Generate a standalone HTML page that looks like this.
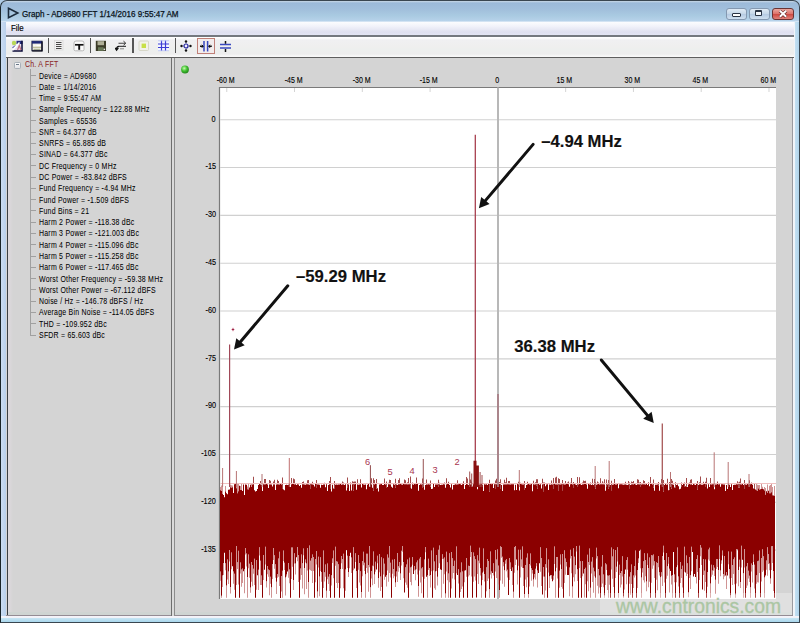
<!DOCTYPE html>
<html><head><meta charset="utf-8"><title>Graph - AD9680 FFT</title>
<style>
html,body{margin:0;padding:0;}
body{width:800px;height:623px;position:relative;overflow:hidden;background:#b0cce6;font-family:"Liberation Sans", sans-serif;}
.t{position:absolute;white-space:nowrap;transform-origin:0 0;line-height:1.2;-webkit-text-stroke:0.15px currentColor;}
.c{position:absolute;white-space:nowrap;text-align:center;line-height:1.2;}
.r{position:absolute;white-space:nowrap;text-align:right;line-height:1.2;}
</style></head><body>
<div style="position:absolute;left:1px;top:1px;width:798px;height:21px;background:linear-gradient(#c9d9e6 0px,#9cbad9 2px,#a2c0dc 9px,#aacbe2 15px,#b7d2ea 20px,#eef4fb 21px);border-radius:6px 6px 0 0"></div>
<div style="position:absolute;left:1px;top:22px;width:5px;height:600px;background:linear-gradient(90deg,#cbdcf2,#b9d0ec)"></div>
<div style="position:absolute;left:793px;top:22px;width:6px;height:600px;background:linear-gradient(90deg,#f4f6fa 0px,#eef3f8 2px,#c4e0f2 2px,#b0d4ec 6px)"></div>
<div style="position:absolute;left:1px;top:616px;width:798px;height:6px;background:linear-gradient(#f6f4fa 0px,#f2f2f8 1.5px,#c8e6f4 2px,#a8d6ec 6px)"></div>
<div style="position:absolute;left:0;top:0;width:798px;height:621px;border:1px solid #3a4650;border-left-color:#1a2428;border-radius:7px 7px 0 0"></div>
<svg style="position:absolute;left:0;top:0" width="30" height="22"><path d="M8.5 8.2 L17.8 13 L8.5 17.8 Z" fill="none" stroke="#1c2c3c" stroke-width="1.6" stroke-linejoin="miter"/></svg>
<div class="t" style="left:21.8px;top:8.6px;font-size:8.6px;transform:scaleX(0.94);color:#0a1420;font-weight:normal;-webkit-text-stroke:0.25px #0a1420">Graph - AD9680 FFT 1/14/2016 9:55:47 AM</div>
<div style="position:absolute;left:725.5px;top:7.5px;width:19px;height:10px;border:1px solid #8498b0;border-radius:3px;background:linear-gradient(#e0ebf5,#c4d6e8 50%,#b4cae2 51%,#cfe0f0);box-sizing:content-box"></div>
<div style="position:absolute;left:748.5px;top:7.5px;width:19px;height:10px;border:1px solid #8498b0;border-radius:3px;background:linear-gradient(#e0ebf5,#c4d6e8 50%,#b4cae2 51%,#cfe0f0);box-sizing:content-box"></div>
<div style="position:absolute;left:771.5px;top:7.5px;width:20px;height:10px;border:1px solid #6a3434;border-radius:3px;background:linear-gradient(#eaa8a0,#dc7068 50%,#cc4840 51%,#e08078);box-sizing:content-box"></div>
<div style="position:absolute;left:732px;top:13px;width:6.5px;height:1.6px;background:#fff;border:1px solid #2a3444;border-radius:1px"></div>
<div style="position:absolute;left:755px;top:10px;width:4.8px;height:3px;border:1.4px solid #2a3444;border-top-width:2px;background:#f4f8fc;border-radius:1px"></div>
<svg style="position:absolute;left:771px;top:7px" width="24" height="14"><path d="M8.8 3.8 L15.2 9.8 M15.2 3.8 L8.8 9.8" stroke="#5a2020" stroke-width="3.2"/><path d="M8.8 3.8 L15.2 9.8 M15.2 3.8 L8.8 9.8" stroke="#fff" stroke-width="2"/></svg>
<div style="position:absolute;left:6px;top:22px;width:788px;height:13.5px;background:linear-gradient(#fbfcfe 0px,#f2f3fa 4px,#dfe0f0 10px,#e2e4f4 13px)"></div>
<div class="t" style="left:10.8px;top:23.0px;font-size:8.8px;transform:scaleX(0.9);color:#000;font-weight:normal;">File</div>
<div style="position:absolute;left:6px;top:35.3px;width:788px;height:1.3px;background:#74787f"></div>
<div style="position:absolute;left:6px;top:36.6px;width:788px;height:20.7px;background:linear-gradient(#ffffff 0px,#fdfdfe 1px,#f0f0f2 3px,#efefee 10px,#edefee 12px,#ededed 17px,#f8f8f8 19px,#f8f8f8 20px)"></div>
<div style="position:absolute;left:6px;top:57px;width:788px;height:1.2px;background:#5e5e5e"></div>
<div style="position:absolute;left:6px;top:58px;width:787px;height:558px;background:#d4d4d4"></div>
<div style="position:absolute;left:6.5px;top:58px;width:1.2px;height:558px;background:#3a3f44"></div>
<div style="position:absolute;left:7.5px;top:58px;width:5px;height:558px;background:linear-gradient(90deg,#dedade,#d8d6d8 60%,#d4d4d4)"></div>
<div style="position:absolute;left:792px;top:58px;width:1px;height:558px;background:#9a9aa0"></div>
<div style="position:absolute;left:7.5px;top:612px;width:784.5px;height:3px;background:#cfd4d2"></div>
<div style="position:absolute;left:6px;top:615px;width:787px;height:1px;background:#948c94"></div>
<div style="position:absolute;left:171px;top:58px;width:1px;height:558px;background:#6e6e6e"></div>
<div style="position:absolute;left:172px;top:58px;width:2px;height:558px;background:#dadada"></div>
<div style="position:absolute;left:174px;top:58px;width:1px;height:558px;background:#8c8c8c"></div>
<div style="position:absolute;left:47.9px;top:38px;width:1.2px;height:15px;background:#555"></div>
<div style="position:absolute;left:90.0px;top:38px;width:1.2px;height:15px;background:#555"></div>
<div style="position:absolute;left:132.4px;top:38px;width:1.2px;height:15px;background:#555"></div>
<div style="position:absolute;left:174.8px;top:38px;width:1.2px;height:15px;background:#555"></div>
<svg style="position:absolute;left:11px;top:40px" width="13" height="12"><rect x="1" y="0.8" width="10.5" height="10.2" fill="#e8e0f0"/><rect x="5.5" y="0.8" width="6" height="3.2" fill="#283080"/><path d="M11 0.8 V11 H1.5" stroke="#0c0c38" stroke-width="1.5" fill="none"/><path d="M1.5 10.2 L8.5 2.5" stroke="#ffffff" stroke-width="1.6"/><path d="M1.5 8 L4 5.5" stroke="#3848a0" stroke-width="1"/><path d="M6.5 10 L8.3 5.5 L10 10" stroke="#c07080" stroke-width="1.2" fill="#f0d0e0"/><circle cx="3" cy="3" r="2.2" fill="#b8d858"/></svg>
<svg style="position:absolute;left:31px;top:40px" width="12" height="12"><rect x="1" y="1.2" width="10" height="9.6" fill="#f2f0e6"/><path d="M1 1.2 H11 V10.8 H1 Z" stroke="#141838" stroke-width="1.1" fill="none"/><rect x="1" y="1.2" width="10" height="2.4" fill="#202a78"/><path d="M2.2 6 h2.3 M5.5 5.6 h4" stroke="#ffffff" stroke-width="1.1"/><path d="M2 7.3 h8" stroke="#b8b890" stroke-width="1.1"/><path d="M2.5 9.3 h7" stroke="#8c9470" stroke-width="0.9"/><path d="M11 1.5 V11 H1.2" stroke="#050510" stroke-width="1.2" fill="none"/></svg>
<svg style="position:absolute;left:54px;top:40px" width="10" height="11"><rect x="0.5" y="0.5" width="8.5" height="9.5" fill="#f0f0f0" stroke="#dadada" stroke-width="0.8"/><path d="M2 2.5 h5.5 M2 4.5 h5.5 M2 6.5 h5.5 M2 8.5 h5.5" stroke="#4a4a4a" stroke-width="1"/></svg>
<svg style="position:absolute;left:72.5px;top:40px" width="13" height="12"><path d="M1 3 Q1 1 3 1 H9 Q11 1 11 3 V9.5 Q11 10.8 9.5 10.8 H2.5 Q1 10.8 1 9.5Z" fill="#fbfbfb" stroke="#a8a8a8" stroke-width="0.8"/><path d="M2 4.8 h8.5" stroke="#111" stroke-width="1.7"/><path d="M6.2 4.8 v5" stroke="#111" stroke-width="1.9"/></svg>
<svg style="position:absolute;left:95px;top:40px" width="12" height="12"><rect x="0.8" y="0.8" width="10.2" height="10.2" fill="#3c3c28"/><rect x="2.5" y="1.2" width="6.5" height="4" fill="#b0b098"/><rect x="3" y="7.2" width="5.5" height="3.6" fill="#687858"/><rect x="8.6" y="8.6" width="1.5" height="1.5" fill="#e8e8e0"/></svg>
<svg style="position:absolute;left:115px;top:40px" width="13" height="12"><path d="M3.5 3.2 H10 M4 6.4 H11" stroke="#444" stroke-width="1.1"/><path d="M8.5 1.2 L10.8 3.2 L8.5 5.2" stroke="#333" stroke-width="1" fill="none"/><path d="M4 6.4 Q1.5 6.4 1.5 9 M0 7.8 L1.6 10.2 L3.4 7.9" stroke="#111" stroke-width="1.2" fill="none"/><path d="M5 8.8 H9" stroke="#888" stroke-width="1"/></svg>
<svg style="position:absolute;left:137.5px;top:39.5px" width="12" height="12"><rect x="1" y="1" width="9.5" height="9.5" rx="1" fill="#f2f2ea" stroke="#d4d4c4" stroke-width="0.9"/><rect x="3.6" y="3.6" width="4.4" height="4.4" fill="#c8e048"/></svg>
<svg style="position:absolute;left:157px;top:40px" width="13" height="12"><rect x="1" y="0.5" width="11" height="10.5" fill="#f4f6ff"/><path d="M1 4 h11 M1 7.5 h11 M4.5 0.5 v10.5 M8.5 0.5 v10.5" stroke="#3c3cd4" stroke-width="1.2"/><path d="M1 0.8 h11 M1 10.7 h11" stroke="#b8c0f0" stroke-width="0.8"/></svg>
<svg style="position:absolute;left:179.5px;top:40px" width="13" height="13"><path d="M6 1.5 v9 M1.5 6 h9" stroke="#9090c0" stroke-width="0.7"/><circle cx="6" cy="6" r="2" fill="#f0f0ff" stroke="#2828a0" stroke-width="1.2"/><circle cx="6" cy="1.5" r="1.2" fill="#111"/><circle cx="6" cy="10.5" r="1.2" fill="#111"/><circle cx="1.5" cy="6" r="1.2" fill="#111"/><circle cx="10.5" cy="6" r="1.2" fill="#111"/></svg>
<div style="position:absolute;left:197px;top:37.5px;width:17.5px;height:16px;border:1.2px solid #c08078;background:#f2ecec;box-sizing:border-box"></div>
<svg style="position:absolute;left:199px;top:39.5px" width="14" height="13"><path d="M5 1 v10.5 M8.6 1 v10.5" stroke="#3848c0" stroke-width="1.5"/><path d="M1 6.3 h3 M9.8 6.3 h3" stroke="#111" stroke-width="1.5"/><path d="M2.8 4.8 L4.3 6.3 L2.8 7.8 M11 4.8 L9.6 6.3 L11 7.8" stroke="#111" stroke-width="1" fill="none"/></svg>
<svg style="position:absolute;left:219px;top:39.5px" width="14" height="13"><path d="M1 4.6 h11 M1 8.1 h11" stroke="#3848c0" stroke-width="1.5"/><path d="M6.5 1 v2.8 M6.5 9 v3" stroke="#111" stroke-width="1.5"/></svg>
<div style="position:absolute;left:13.8px;top:61.6px;width:5.4px;height:5.2px;border:0.9px solid #a8b0b8;border-radius:1.5px;background:linear-gradient(#fafafa,#e4e4e8)"></div>
<div style="position:absolute;left:15.6px;top:64.2px;width:3.4px;height:1px;background:#6a7888"></div>
<div class="t" style="left:25px;top:59.0px;font-size:8.8px;transform:scaleX(0.79);color:#8c2626;font-weight:normal;letter-spacing:0.3px;-webkit-text-stroke:0.05px currentColor">Ch. A FFT</div>
<div style="position:absolute;left:30px;top:69px;width:0.9px;height:265.9px;background:#a0a0a0"></div>
<div style="position:absolute;left:30px;top:75.10px;width:6px;height:0.9px;background:#a0a0a0"></div>
<div class="t" style="left:38.5px;top:70.5px;font-size:8.7px;transform:scaleX(0.8);color:#000;font-weight:normal;letter-spacing:0.3px;-webkit-text-stroke:0.05px #000">Device = AD9680</div>
<div style="position:absolute;left:30px;top:86.38px;width:6px;height:0.9px;background:#a0a0a0"></div>
<div class="t" style="left:38.5px;top:81.78px;font-size:8.7px;transform:scaleX(0.8);color:#000;font-weight:normal;letter-spacing:0.3px;-webkit-text-stroke:0.05px #000">Date = 1/14/2016</div>
<div style="position:absolute;left:30px;top:97.66px;width:6px;height:0.9px;background:#a0a0a0"></div>
<div class="t" style="left:38.5px;top:93.06px;font-size:8.7px;transform:scaleX(0.8);color:#000;font-weight:normal;letter-spacing:0.3px;-webkit-text-stroke:0.05px #000">Time = 9:55:47 AM</div>
<div style="position:absolute;left:30px;top:108.94px;width:6px;height:0.9px;background:#a0a0a0"></div>
<div class="t" style="left:38.5px;top:104.34px;font-size:8.7px;transform:scaleX(0.8);color:#000;font-weight:normal;letter-spacing:0.3px;-webkit-text-stroke:0.05px #000">Sample Frequency = 122.88 MHz</div>
<div style="position:absolute;left:30px;top:120.22px;width:6px;height:0.9px;background:#a0a0a0"></div>
<div class="t" style="left:38.5px;top:115.62px;font-size:8.7px;transform:scaleX(0.8);color:#000;font-weight:normal;letter-spacing:0.3px;-webkit-text-stroke:0.05px #000">Samples = 65536</div>
<div style="position:absolute;left:30px;top:131.50px;width:6px;height:0.9px;background:#a0a0a0"></div>
<div class="t" style="left:38.5px;top:126.9px;font-size:8.7px;transform:scaleX(0.8);color:#000;font-weight:normal;letter-spacing:0.3px;-webkit-text-stroke:0.05px #000">SNR = 64.377 dB</div>
<div style="position:absolute;left:30px;top:142.78px;width:6px;height:0.9px;background:#a0a0a0"></div>
<div class="t" style="left:38.5px;top:138.18px;font-size:8.7px;transform:scaleX(0.8);color:#000;font-weight:normal;letter-spacing:0.3px;-webkit-text-stroke:0.05px #000">SNRFS = 65.885 dB</div>
<div style="position:absolute;left:30px;top:154.06px;width:6px;height:0.9px;background:#a0a0a0"></div>
<div class="t" style="left:38.5px;top:149.45999999999998px;font-size:8.7px;transform:scaleX(0.8);color:#000;font-weight:normal;letter-spacing:0.3px;-webkit-text-stroke:0.05px #000">SINAD = 64.377 dBc</div>
<div style="position:absolute;left:30px;top:165.34px;width:6px;height:0.9px;background:#a0a0a0"></div>
<div class="t" style="left:38.5px;top:160.74px;font-size:8.7px;transform:scaleX(0.8);color:#000;font-weight:normal;letter-spacing:0.3px;-webkit-text-stroke:0.05px #000">DC Frequency = 0 MHz</div>
<div style="position:absolute;left:30px;top:176.62px;width:6px;height:0.9px;background:#a0a0a0"></div>
<div class="t" style="left:38.5px;top:172.01999999999998px;font-size:8.7px;transform:scaleX(0.8);color:#000;font-weight:normal;letter-spacing:0.3px;-webkit-text-stroke:0.05px #000">DC Power = -83.842 dBFS</div>
<div style="position:absolute;left:30px;top:187.90px;width:6px;height:0.9px;background:#a0a0a0"></div>
<div class="t" style="left:38.5px;top:183.3px;font-size:8.7px;transform:scaleX(0.8);color:#000;font-weight:normal;letter-spacing:0.3px;-webkit-text-stroke:0.05px #000">Fund Frequency = -4.94 MHz</div>
<div style="position:absolute;left:30px;top:199.18px;width:6px;height:0.9px;background:#a0a0a0"></div>
<div class="t" style="left:38.5px;top:194.57999999999998px;font-size:8.7px;transform:scaleX(0.8);color:#000;font-weight:normal;letter-spacing:0.3px;-webkit-text-stroke:0.05px #000">Fund Power = -1.509 dBFS</div>
<div style="position:absolute;left:30px;top:210.46px;width:6px;height:0.9px;background:#a0a0a0"></div>
<div class="t" style="left:38.5px;top:205.85999999999999px;font-size:8.7px;transform:scaleX(0.8);color:#000;font-weight:normal;letter-spacing:0.3px;-webkit-text-stroke:0.05px #000">Fund Bins = 21</div>
<div style="position:absolute;left:30px;top:221.74px;width:6px;height:0.9px;background:#a0a0a0"></div>
<div class="t" style="left:38.5px;top:217.14px;font-size:8.7px;transform:scaleX(0.8);color:#000;font-weight:normal;letter-spacing:0.3px;-webkit-text-stroke:0.05px #000">Harm 2 Power = -118.38 dBc</div>
<div style="position:absolute;left:30px;top:233.02px;width:6px;height:0.9px;background:#a0a0a0"></div>
<div class="t" style="left:38.5px;top:228.42px;font-size:8.7px;transform:scaleX(0.8);color:#000;font-weight:normal;letter-spacing:0.3px;-webkit-text-stroke:0.05px #000">Harm 3 Power = -121.003 dBc</div>
<div style="position:absolute;left:30px;top:244.30px;width:6px;height:0.9px;background:#a0a0a0"></div>
<div class="t" style="left:38.5px;top:239.7px;font-size:8.7px;transform:scaleX(0.8);color:#000;font-weight:normal;letter-spacing:0.3px;-webkit-text-stroke:0.05px #000">Harm 4 Power = -115.096 dBc</div>
<div style="position:absolute;left:30px;top:255.58px;width:6px;height:0.9px;background:#a0a0a0"></div>
<div class="t" style="left:38.5px;top:250.98px;font-size:8.7px;transform:scaleX(0.8);color:#000;font-weight:normal;letter-spacing:0.3px;-webkit-text-stroke:0.05px #000">Harm 5 Power = -115.258 dBc</div>
<div style="position:absolute;left:30px;top:266.86px;width:6px;height:0.9px;background:#a0a0a0"></div>
<div class="t" style="left:38.5px;top:262.26px;font-size:8.7px;transform:scaleX(0.8);color:#000;font-weight:normal;letter-spacing:0.3px;-webkit-text-stroke:0.05px #000">Harm 6 Power = -117.465 dBc</div>
<div style="position:absolute;left:30px;top:278.14px;width:6px;height:0.9px;background:#a0a0a0"></div>
<div class="t" style="left:38.5px;top:273.53999999999996px;font-size:8.7px;transform:scaleX(0.8);color:#000;font-weight:normal;letter-spacing:0.3px;-webkit-text-stroke:0.05px #000">Worst Other Frequency = -59.38 MHz</div>
<div style="position:absolute;left:30px;top:289.42px;width:6px;height:0.9px;background:#a0a0a0"></div>
<div class="t" style="left:38.5px;top:284.82px;font-size:8.7px;transform:scaleX(0.8);color:#000;font-weight:normal;letter-spacing:0.3px;-webkit-text-stroke:0.05px #000">Worst Other Power = -67.112 dBFS</div>
<div style="position:absolute;left:30px;top:300.70px;width:6px;height:0.9px;background:#a0a0a0"></div>
<div class="t" style="left:38.5px;top:296.1px;font-size:8.7px;transform:scaleX(0.8);color:#000;font-weight:normal;letter-spacing:0.3px;-webkit-text-stroke:0.05px #000">Noise / Hz = -146.78 dBFS / Hz</div>
<div style="position:absolute;left:30px;top:311.98px;width:6px;height:0.9px;background:#a0a0a0"></div>
<div class="t" style="left:38.5px;top:307.38px;font-size:8.7px;transform:scaleX(0.8);color:#000;font-weight:normal;letter-spacing:0.3px;-webkit-text-stroke:0.05px #000">Average Bin Noise = -114.05 dBFS</div>
<div style="position:absolute;left:30px;top:323.26px;width:6px;height:0.9px;background:#a0a0a0"></div>
<div class="t" style="left:38.5px;top:318.65999999999997px;font-size:8.7px;transform:scaleX(0.8);color:#000;font-weight:normal;letter-spacing:0.3px;-webkit-text-stroke:0.05px #000">THD = -109.952 dBc</div>
<div style="position:absolute;left:30px;top:334.54px;width:6px;height:0.9px;background:#a0a0a0"></div>
<div class="t" style="left:38.5px;top:329.94px;font-size:8.7px;transform:scaleX(0.8);color:#000;font-weight:normal;letter-spacing:0.3px;-webkit-text-stroke:0.05px #000">SFDR = 65.603 dBc</div>
<svg style="position:absolute;left:0;top:0" width="800" height="623" viewBox="0 0 800 623">
<defs><radialGradient id="gd" cx="0.4" cy="0.35" r="0.7"><stop offset="0" stop-color="#c8ffb0"/><stop offset="0.5" stop-color="#40c030"/><stop offset="1" stop-color="#208018"/></radialGradient></defs>
<circle cx="185" cy="69.5" r="3.9" fill="url(#gd)"/>
<rect x="219.5" y="87.5" width="556.5" height="511.5" fill="#ffffff"/>
<path d="M219.5 599 V87.5 H776" stroke="#7a7a7a" stroke-width="1.2" fill="none"/>
<path d="M226.75 88.0 V92.0" stroke="#d4d4d4" stroke-width="1"/>
<path d="M294.53 88.0 V92.0" stroke="#d4d4d4" stroke-width="1"/>
<path d="M362.31 88.0 V92.0" stroke="#d4d4d4" stroke-width="1"/>
<path d="M430.09 88.0 V92.0" stroke="#d4d4d4" stroke-width="1"/>
<path d="M497.87 88.0 V92.0" stroke="#d4d4d4" stroke-width="1"/>
<path d="M565.65 88.0 V92.0" stroke="#d4d4d4" stroke-width="1"/>
<path d="M633.43 88.0 V92.0" stroke="#d4d4d4" stroke-width="1"/>
<path d="M701.21 88.0 V92.0" stroke="#d4d4d4" stroke-width="1"/>
<path d="M768.99 88.0 V92.0" stroke="#d4d4d4" stroke-width="1"/>
<path d="M220.1 119.75 H776" stroke="#d0d0d0" stroke-width="1.1"/>
<path d="M220.1 167.57 H776" stroke="#d0d0d0" stroke-width="1.1"/>
<path d="M220.1 215.39 H776" stroke="#d0d0d0" stroke-width="1.1"/>
<path d="M220.1 263.21 H776" stroke="#d0d0d0" stroke-width="1.1"/>
<path d="M220.1 311.03 H776" stroke="#d0d0d0" stroke-width="1.1"/>
<path d="M220.1 358.85 H776" stroke="#d0d0d0" stroke-width="1.1"/>
<path d="M220.1 406.67 H776" stroke="#d0d0d0" stroke-width="1.1"/>
<path d="M220.1 454.49 H776" stroke="#d0d0d0" stroke-width="1.1"/>
<path d="M220.1 502.31 H776" stroke="#d0d0d0" stroke-width="1.1"/>
<path d="M220.1 550.13 H776" stroke="#d0d0d0" stroke-width="1.1"/>
<path d="M498 87.5 V599" stroke="#b8b8b8" stroke-width="2"/>
<path d="M220 487.0h1V490.2h-1zM220 571.4h1V580.8h-1zM221 485.6h1V491.1h-1zM221 595.7h1V597.8h-1zM222 484.1h1V493.9h-1zM222 575.5h1V586.9h-1zM223 562.9h1V575.0h-1zM225 486.0h1V491.6h-1zM225 563.3h1V570.3h-1zM226 585.6h1V597.8h-1zM227 559.5h1V579.4h-1zM228 571.6h1V583.9h-1zM229 550.1h1V561.5h-1zM230 484.8h1V487.2h-1zM230 586.9h1V593.6h-1zM231 485.2h1V487.8h-1zM231 552.4h1V569.3h-1zM232 485.6h1V487.2h-1zM233 571.5h1V583.7h-1zM234 573.7h1V589.7h-1zM236 486.4h1V488.2h-1zM236 545.9h1V585.1h-1zM237 483.9h1V493.3h-1zM237 562.2h1V569.0h-1zM238 484.0h1V491.3h-1zM238 550.7h1V584.6h-1zM240 486.0h1V490.1h-1zM240 562.6h1V573.4h-1zM241 484.0h1V490.0h-1zM241 569.4h1V586.7h-1zM242 568.4h1V582.9h-1zM244 569.3h1V593.2h-1zM245 547.9h1V554.5h-1zM246 553.6h1V566.4h-1zM247 486.5h1V489.3h-1zM247 577.0h1V597.8h-1zM248 483.3h1V489.4h-1zM248 554.4h1V568.2h-1zM249 563.7h1V577.7h-1zM250 587.6h1V592.8h-1zM251 483.3h1V486.9h-1zM251 562.0h1V581.8h-1zM252 565.1h1V586.2h-1zM253 568.7h1V573.8h-1zM254 558.7h1V585.1h-1zM256 560.0h1V589.7h-1zM258 569.8h1V590.0h-1zM259 547.2h1V555.4h-1zM260 560.8h1V585.0h-1zM261 575.6h1V584.9h-1zM263 554.9h1V579.9h-1zM265 546.7h1V564.4h-1zM266 581.2h1V587.5h-1zM267 566.1h1V574.3h-1zM268 569.5h1V576.7h-1zM269 570.3h1V595.3h-1zM270 576.7h1V583.8h-1zM271 587.2h1V597.8h-1zM272 564.1h1V579.0h-1zM273 548.1h1V560.0h-1zM274 555.3h1V568.8h-1zM275 564.3h1V577.7h-1zM276 581.7h1V594.0h-1zM277 574.0h1V577.7h-1zM278 558.6h1V576.7h-1zM279 551.7h1V585.9h-1zM281 576.0h1V591.4h-1zM282 570.8h1V597.8h-1zM283 550.6h1V561.0h-1zM284 562.8h1V570.1h-1zM285 577.5h1V595.4h-1zM286 574.5h1V576.6h-1zM288 562.9h1V577.8h-1zM289 569.4h1V583.3h-1zM291 547.5h1V578.9h-1zM292 547.6h1V566.8h-1zM293 580.0h1V590.1h-1zM294 553.3h1V563.6h-1zM295 563.6h1V574.4h-1zM297 547.1h1V561.2h-1zM298 555.0h1V581.9h-1zM300 568.6h1V579.7h-1zM301 554.5h1V575.1h-1zM302 563.2h1V588.6h-1zM303 548.4h1V555.2h-1zM304 568.0h1V594.3h-1zM305 559.6h1V562.5h-1zM306 563.5h1V589.1h-1zM307 548.1h1V570.5h-1zM308 582.1h1V597.8h-1zM309 545.6h1V569.5h-1zM310 560.8h1V570.2h-1zM311 558.3h1V571.0h-1zM312 554.4h1V583.0h-1zM313 556.9h1V571.0h-1zM315 559.1h1V582.2h-1zM316 551.0h1V564.6h-1zM317 591.4h1V597.8h-1zM318 556.8h1V567.5h-1zM319 576.5h1V596.3h-1zM320 557.2h1V571.0h-1zM321 571.9h1V581.7h-1zM323 550.5h1V588.0h-1zM324 572.2h1V581.4h-1zM325 564.5h1V576.7h-1zM326 590.7h1V597.8h-1zM327 563.5h1V579.3h-1zM328 576.8h1V584.0h-1zM329 574.0h1V591.0h-1zM331 575.3h1V585.5h-1zM332 558.4h1V562.9h-1zM333 550.6h1V578.2h-1zM335 546.7h1V565.7h-1zM336 561.2h1V583.1h-1zM337 561.7h1V587.9h-1zM338 564.2h1V583.1h-1zM340 569.0h1V588.2h-1zM341 556.0h1V563.2h-1zM342 558.9h1V569.1h-1zM343 553.7h1V588.2h-1zM345 569.6h1V590.8h-1zM347 555.8h1V567.9h-1zM348 571.9h1V577.1h-1zM349 556.1h1V568.2h-1zM351 557.6h1V573.1h-1zM353 547.2h1V570.3h-1zM355 553.3h1V562.0h-1zM356 570.9h1V587.9h-1zM358 555.1h1V569.8h-1zM359 563.0h1V582.6h-1zM360 571.3h1V585.4h-1zM361 592.1h1V597.8h-1zM362 561.0h1V576.3h-1zM363 551.8h1V565.2h-1zM364 562.7h1V571.1h-1zM365 574.3h1V597.8h-1zM366 553.7h1V567.9h-1zM367 553.7h1V572.8h-1zM368 565.1h1V591.8h-1zM369 545.9h1V567.3h-1zM370 587.3h1V597.8h-1zM371 570.9h1V578.4h-1zM372 565.8h1V585.2h-1zM373 551.5h1V566.3h-1zM374 574.4h1V584.0h-1zM375 561.8h1V571.8h-1zM377 555.8h1V563.2h-1zM378 577.9h1V587.8h-1zM379 553.9h1V572.3h-1zM380 576.5h1V590.9h-1zM381 557.2h1V586.9h-1zM383 558.4h1V574.5h-1zM384 563.7h1V579.8h-1zM386 575.3h1V586.4h-1zM387 554.6h1V570.4h-1zM388 557.8h1V581.7h-1zM389 546.0h1V572.9h-1zM390 562.7h1V577.4h-1zM392 559.8h1V573.8h-1zM393 569.0h1V578.3h-1zM394 559.2h1V576.3h-1zM395 582.5h1V587.1h-1zM396 571.4h1V576.4h-1zM397 553.1h1V581.9h-1zM398 566.2h1V571.8h-1zM399 562.1h1V567.8h-1zM400 573.5h1V579.9h-1zM401 550.8h1V565.6h-1zM402 546.1h1V551.7h-1zM403 562.0h1V578.3h-1zM405 567.3h1V582.6h-1zM406 564.5h1V584.8h-1zM407 559.5h1V587.8h-1zM409 557.8h1V572.8h-1zM410 567.6h1V581.9h-1zM411 566.7h1V585.3h-1zM412 556.9h1V564.7h-1zM414 565.9h1V570.5h-1zM415 569.7h1V580.2h-1zM416 562.6h1V569.2h-1zM417 560.6h1V574.4h-1zM418 586.1h1V596.7h-1zM419 558.8h1V570.4h-1zM420 556.9h1V582.5h-1zM421 568.4h1V593.3h-1zM422 567.3h1V576.7h-1zM424 559.6h1V578.7h-1zM425 547.1h1V552.2h-1zM427 575.2h1V597.8h-1zM428 558.8h1V570.0h-1zM429 568.0h1V575.9h-1zM430 575.1h1V587.5h-1zM431 550.6h1V571.2h-1zM433 547.7h1V570.5h-1zM434 561.6h1V588.2h-1zM435 571.4h1V589.7h-1zM436 555.1h1V571.0h-1zM437 576.8h1V585.4h-1zM438 549.7h1V568.0h-1zM439 545.5h1V563.2h-1zM440 569.3h1V569.8h-1zM441 570.1h1V597.8h-1zM442 554.2h1V559.1h-1zM443 558.7h1V583.7h-1zM444 557.6h1V574.2h-1zM445 593.6h1V597.8h-1zM446 551.7h1V571.6h-1zM447 562.2h1V580.2h-1zM448 573.5h1V597.8h-1zM449 553.2h1V582.3h-1zM451 552.0h1V588.4h-1zM452 558.3h1V578.4h-1zM453 566.1h1V573.0h-1zM454 560.7h1V579.6h-1zM456 546.5h1V573.3h-1zM458 569.3h1V583.6h-1zM460 572.4h1V591.9h-1zM461 562.5h1V589.1h-1zM462 571.4h1V586.4h-1zM464 570.8h1V582.2h-1zM466 557.9h1V576.8h-1zM468 565.7h1V576.5h-1zM469 566.1h1V575.2h-1zM470 545.7h1V557.0h-1zM471 551.9h1V576.4h-1zM473 552.4h1V581.7h-1zM474 556.2h1V576.6h-1zM475 559.3h1V580.4h-1zM477 555.3h1V574.0h-1zM478 560.8h1V584.1h-1zM479 547.7h1V563.2h-1zM480 568.1h1V575.4h-1zM481 585.5h1V597.8h-1zM482 572.7h1V580.0h-1zM483 548.6h1V571.4h-1zM484 574.0h1V581.4h-1zM486 567.3h1V591.3h-1zM487 558.9h1V581.1h-1zM488 561.0h1V578.6h-1zM489 589.0h1V597.8h-1zM490 551.4h1V574.4h-1zM491 571.5h1V578.6h-1zM493 563.3h1V575.5h-1zM495 550.1h1V571.4h-1zM496 559.5h1V578.0h-1zM497 549.2h1V578.4h-1zM498 565.6h1V584.6h-1zM499 589.9h1V597.8h-1zM500 546.3h1V580.5h-1zM501 547.0h1V557.8h-1zM502 556.8h1V583.8h-1zM503 562.2h1V566.2h-1zM504 570.3h1V586.7h-1zM505 560.6h1V563.8h-1zM506 559.0h1V571.2h-1zM507 569.7h1V577.4h-1zM509 558.0h1V580.0h-1zM510 562.6h1V569.1h-1zM512 567.6h1V584.9h-1zM513 591.8h1V597.8h-1zM514 547.1h1V572.8h-1zM515 546.0h1V565.1h-1zM517 570.6h1V584.5h-1zM518 549.7h1V565.8h-1zM520 549.7h1V577.6h-1zM521 559.5h1V566.7h-1zM522 546.4h1V568.0h-1zM523 567.9h1V586.0h-1zM524 594.1h1V597.8h-1zM525 564.9h1V579.4h-1zM526 557.7h1V587.2h-1zM527 553.6h1V577.3h-1zM528 593.9h1V597.8h-1zM529 564.0h1V586.6h-1zM530 553.6h1V565.5h-1zM531 568.2h1V580.8h-1zM532 570.1h1V573.4h-1zM533 579.5h1V586.6h-1zM534 574.1h1V577.6h-1zM535 568.8h1V579.6h-1zM536 563.3h1V566.3h-1zM537 570.4h1V587.6h-1zM540 547.3h1V571.8h-1zM541 558.1h1V586.1h-1zM543 566.9h1V576.6h-1zM544 576.7h1V597.8h-1zM545 564.3h1V590.6h-1zM546 548.2h1V567.7h-1zM548 559.6h1V572.5h-1zM549 576.2h1V588.0h-1zM551 575.1h1V578.7h-1zM553 575.8h1V579.8h-1zM554 546.4h1V564.0h-1zM555 571.4h1V597.8h-1zM556 557.0h1V567.8h-1zM557 557.0h1V578.5h-1zM559 570.7h1V587.7h-1zM560 554.4h1V564.4h-1zM561 569.0h1V587.0h-1zM562 554.0h1V588.8h-1zM564 550.3h1V583.1h-1zM565 558.4h1V574.8h-1zM566 562.1h1V566.4h-1zM569 567.6h1V596.2h-1zM570 549.8h1V558.6h-1zM571 556.1h1V573.2h-1zM572 586.4h1V597.8h-1zM573 548.2h1V577.3h-1zM574 556.8h1V581.4h-1zM575 565.3h1V574.3h-1zM576 546.1h1V551.5h-1zM577 569.3h1V581.0h-1zM579 545.7h1V568.1h-1zM580 561.3h1V578.0h-1zM582 560.9h1V576.3h-1zM584 568.9h1V597.5h-1zM585 567.8h1V584.3h-1zM587 554.8h1V581.3h-1zM588 562.1h1V591.3h-1zM589 548.5h1V564.9h-1zM590 587.8h1V597.8h-1zM591 561.8h1V573.4h-1zM592 557.2h1V582.1h-1zM593 567.8h1V592.8h-1zM594 571.6h1V576.3h-1zM595 577.8h1V597.8h-1zM596 547.7h1V558.4h-1zM597 556.2h1V585.8h-1zM598 569.0h1V593.4h-1zM599 575.4h1V587.6h-1zM601 566.8h1V586.9h-1zM602 554.9h1V583.4h-1zM603 574.4h1V587.2h-1zM604 595.4h1V597.8h-1zM605 563.2h1V584.9h-1zM606 564.6h1V570.0h-1zM607 575.5h1V590.1h-1zM608 575.8h1V597.8h-1zM609 575.2h1V584.8h-1zM611 547.4h1V569.4h-1zM612 556.5h1V578.8h-1zM613 549.3h1V587.0h-1zM615 550.0h1V578.0h-1zM616 566.7h1V571.9h-1zM617 547.3h1V561.5h-1zM618 593.1h1V597.8h-1zM619 564.8h1V575.0h-1zM620 573.1h1V587.5h-1zM621 570.9h1V584.4h-1zM622 556.3h1V576.6h-1zM623 596.5h1V597.8h-1zM624 574.0h1V589.6h-1zM626 560.1h1V584.2h-1zM627 557.2h1V569.7h-1zM629 576.8h1V583.7h-1zM630 572.3h1V594.8h-1zM631 564.6h1V583.9h-1zM633 575.6h1V588.1h-1zM634 566.0h1V577.5h-1zM635 550.6h1V575.6h-1zM637 570.0h1V587.9h-1zM638 558.4h1V563.0h-1zM640 549.7h1V568.3h-1zM641 577.5h1V597.8h-1zM642 568.3h1V572.6h-1zM643 561.3h1V580.2h-1zM644 553.3h1V582.4h-1zM645 560.0h1V576.3h-1zM646 581.6h1V591.2h-1zM647 553.4h1V565.1h-1zM648 568.1h1V587.2h-1zM649 557.5h1V581.7h-1zM651 554.9h1V582.7h-1zM652 555.5h1V568.8h-1zM653 554.6h1V565.5h-1zM654 561.2h1V577.9h-1zM656 562.2h1V579.8h-1zM657 563.0h1V590.2h-1zM658 555.9h1V567.3h-1zM659 572.2h1V575.5h-1zM660 577.3h1V597.8h-1zM661 572.2h1V576.2h-1zM662 556.1h1V585.9h-1zM663 545.7h1V552.5h-1zM664 560.1h1V582.6h-1zM666 553.1h1V578.7h-1zM667 566.2h1V575.7h-1zM668 556.9h1V563.8h-1zM669 568.7h1V592.5h-1zM671 575.8h1V584.6h-1zM672 575.1h1V597.8h-1zM674 574.6h1V582.3h-1zM676 567.3h1V582.3h-1zM677 547.5h1V565.3h-1zM678 576.5h1V586.4h-1zM680 562.1h1V582.9h-1zM681 568.9h1V577.9h-1zM682 565.8h1V587.6h-1zM684 546.7h1V571.7h-1zM686 555.4h1V576.0h-1zM687 563.2h1V574.1h-1zM688 592.2h1V597.3h-1zM689 557.0h1V577.9h-1zM690 575.3h1V588.9h-1zM691 546.8h1V571.2h-1zM696 559.1h1V583.4h-1zM697 555.2h1V572.0h-1zM699 568.0h1V579.9h-1zM700 545.1h1V556.2h-1zM701 547.7h1V565.1h-1zM703 558.9h1V575.1h-1zM704 570.7h1V590.7h-1zM705 559.5h1V581.9h-1zM707 571.9h1V586.8h-1zM708 549.5h1V559.5h-1zM709 547.7h1V560.8h-1zM710 583.6h1V597.8h-1zM711 564.7h1V576.8h-1zM712 570.4h1V574.7h-1zM713 565.3h1V570.8h-1zM714 567.7h1V576.1h-1zM715 579.8h1V594.1h-1zM716 559.0h1V568.9h-1zM717 559.0h1V566.9h-1zM718 570.1h1V583.7h-1zM719 545.6h1V559.1h-1zM720 570.6h1V576.3h-1zM721 560.5h1V563.8h-1zM722 550.6h1V555.6h-1zM723 574.1h1V579.3h-1zM724 555.9h1V576.6h-1zM726 571.9h1V589.0h-1zM728 551.4h1V564.2h-1zM729 569.0h1V578.5h-1zM730 595.3h1V597.8h-1zM731 551.7h1V578.0h-1zM732 565.1h1V585.0h-1zM733 559.2h1V573.9h-1zM734 557.5h1V584.2h-1zM735 594.4h1V597.8h-1zM736 549.1h1V583.5h-1zM738 570.0h1V586.3h-1zM739 559.8h1V566.8h-1zM740 581.9h1V587.9h-1zM741 545.7h1V567.4h-1zM743 573.2h1V597.8h-1zM744 548.9h1V567.4h-1zM746 566.6h1V588.1h-1zM747 563.1h1V585.6h-1zM748 570.8h1V578.6h-1zM749 575.8h1V581.9h-1zM750 587.2h1V597.8h-1zM751 563.6h1V571.5h-1zM752 564.9h1V582.5h-1zM753 554.4h1V562.0h-1zM754 564.7h1V588.4h-1zM756 483.6h1V490.2h-1zM756 575.2h1V583.8h-1zM757 484.8h1V491.0h-1zM757 561.3h1V582.2h-1zM758 484.9h1V488.4h-1zM758 560.8h1V582.6h-1zM759 484.9h1V489.7h-1zM759 550.6h1V573.0h-1zM761 483.7h1V489.1h-1zM761 558.0h1V581.4h-1zM762 486.8h1V488.7h-1zM762 549.2h1V572.0h-1zM763 556.3h1V570.6h-1zM764 487.0h1V490.6h-1zM764 577.6h1V597.8h-1zM765 488.0h1V494.7h-1zM765 575.2h1V576.2h-1zM766 560.4h1V569.7h-1zM767 484.5h1V492.9h-1zM767 547.2h1V575.7h-1zM768 554.0h1V564.0h-1zM769 485.8h1V493.2h-1zM769 563.6h1V570.2h-1zM770 484.9h1V493.2h-1zM770 578.5h1V583.8h-1zM771 483.1h1V492.3h-1zM771 546.3h1V570.1h-1zM772 486.9h1V495.3h-1zM772 546.1h1V562.9h-1zM773 571.0h1V591.0h-1zM774 485.9h1V495.8h-1z" fill="#d09494"/>
<path d="M220 490.2h1V571.4h-1zM221 491.1h1V595.7h-1zM222 493.9h1V575.5h-1zM223 495.1h1V562.9h-1zM224 497.2h1V552.8h-1zM225 491.6h1V563.3h-1zM226 493.2h1V585.6h-1zM227 494.3h1V559.5h-1zM228 489.8h1V571.6h-1zM229 489.4h1V550.1h-1zM230 487.2h1V586.9h-1zM231 487.8h1V552.4h-1zM232 487.2h1V566.2h-1zM233 493.1h1V571.5h-1zM234 484.2h1V573.7h-1zM235 484.0h1V597.8h-1zM236 488.2h1V545.9h-1zM237 493.3h1V562.2h-1zM238 491.3h1V550.7h-1zM239 485.7h1V597.8h-1zM240 490.1h1V562.6h-1zM241 490.0h1V569.4h-1zM242 490.9h1V568.4h-1zM243 484.5h1V571.3h-1zM244 494.9h1V569.3h-1zM245 484.4h1V547.9h-1zM246 484.7h1V553.6h-1zM247 489.3h1V577.0h-1zM248 489.4h1V554.4h-1zM249 487.4h1V563.7h-1zM250 484.7h1V587.6h-1zM251 486.9h1V562.0h-1zM252 484.5h1V565.1h-1zM253 484.2h1V568.7h-1zM254 490.2h1V558.7h-1zM255 491.4h1V597.8h-1zM256 491.0h1V560.0h-1zM257 488.9h1V575.2h-1zM258 484.9h1V569.8h-1zM259 484.1h1V547.2h-1zM260 484.7h1V560.8h-1zM261 485.1h1V575.6h-1zM262 490.9h1V597.8h-1zM263 484.3h1V554.9h-1zM264 484.7h1V569.8h-1zM265 485.0h1V546.7h-1zM266 484.0h1V581.2h-1zM267 484.6h1V566.1h-1zM268 487.9h1V569.5h-1zM269 484.6h1V570.3h-1zM270 484.7h1V576.7h-1zM271 484.4h1V587.2h-1zM272 486.5h1V564.1h-1zM273 484.8h1V548.1h-1zM274 484.7h1V555.3h-1zM275 489.9h1V564.3h-1zM276 484.4h1V581.7h-1zM277 485.0h1V574.0h-1zM278 484.4h1V558.6h-1zM279 484.6h1V551.7h-1zM280 483.9h1V597.9h-1zM281 484.6h1V576.0h-1zM282 489.0h1V570.8h-1zM283 489.5h1V550.6h-1zM284 490.2h1V562.8h-1zM285 485.1h1V577.5h-1zM286 484.7h1V574.5h-1zM287 484.9h1V571.4h-1zM288 484.7h1V562.9h-1zM289 484.1h1V569.4h-1zM290 487.1h1V597.8h-1zM291 485.1h1V547.5h-1zM292 484.1h1V547.6h-1zM293 483.9h1V580.0h-1zM294 484.6h1V553.3h-1zM295 484.3h1V563.6h-1zM296 485.0h1V557.2h-1zM297 484.2h1V547.1h-1zM298 484.5h1V555.0h-1zM299 486.1h1V597.8h-1zM300 484.9h1V568.6h-1zM301 487.8h1V554.5h-1zM302 484.2h1V563.2h-1zM303 484.9h1V548.4h-1zM304 484.5h1V568.0h-1zM305 484.8h1V559.6h-1zM306 484.2h1V563.5h-1zM307 484.3h1V548.1h-1zM308 484.7h1V582.1h-1zM309 484.7h1V545.6h-1zM310 489.1h1V560.8h-1zM311 484.2h1V558.3h-1zM312 484.7h1V554.4h-1zM313 484.8h1V556.9h-1zM314 486.5h1V597.8h-1zM315 484.1h1V559.1h-1zM316 487.2h1V551.0h-1zM317 484.4h1V591.4h-1zM318 484.4h1V556.8h-1zM319 484.7h1V576.5h-1zM320 487.8h1V557.2h-1zM321 484.8h1V571.9h-1zM322 485.0h1V597.8h-1zM323 484.5h1V550.5h-1zM324 484.8h1V572.2h-1zM325 487.3h1V564.5h-1zM326 484.3h1V590.7h-1zM327 491.0h1V563.5h-1zM328 485.0h1V576.8h-1zM329 484.2h1V574.0h-1zM330 489.0h1V597.8h-1zM331 491.4h1V575.3h-1zM332 484.8h1V558.4h-1zM333 488.6h1V550.6h-1zM334 488.9h1V597.8h-1zM335 484.7h1V546.7h-1zM336 484.6h1V561.2h-1zM337 484.8h1V561.7h-1zM338 484.4h1V564.2h-1zM339 484.4h1V597.8h-1zM340 484.0h1V569.0h-1zM341 484.8h1V556.0h-1zM342 484.5h1V558.9h-1zM343 484.4h1V553.7h-1zM344 484.9h1V597.8h-1zM345 484.2h1V569.6h-1zM346 490.4h1V549.9h-1zM347 487.3h1V555.8h-1zM348 484.4h1V571.9h-1zM349 490.9h1V556.1h-1zM350 484.5h1V552.7h-1zM351 490.6h1V557.6h-1zM352 485.1h1V597.8h-1zM353 490.8h1V547.2h-1zM354 484.9h1V568.6h-1zM355 484.0h1V553.3h-1zM356 489.7h1V570.9h-1zM357 484.6h1V597.8h-1zM358 484.7h1V555.1h-1zM359 484.4h1V563.0h-1zM360 484.2h1V571.3h-1zM361 487.5h1V592.1h-1zM362 483.9h1V561.0h-1zM363 484.5h1V551.8h-1zM364 484.8h1V562.7h-1zM365 484.5h1V574.3h-1zM366 489.3h1V553.7h-1zM367 484.8h1V553.7h-1zM368 483.9h1V565.1h-1zM369 486.8h1V545.9h-1zM370 484.2h1V587.3h-1zM371 484.6h1V570.9h-1zM372 487.7h1V565.8h-1zM373 490.5h1V551.5h-1zM374 484.8h1V574.4h-1zM375 484.0h1V561.8h-1zM376 488.5h1V569.6h-1zM377 488.2h1V555.8h-1zM378 491.5h1V577.9h-1zM379 484.6h1V553.9h-1zM380 484.3h1V576.5h-1zM381 484.0h1V557.2h-1zM382 485.0h1V597.8h-1zM383 484.9h1V558.4h-1zM384 484.1h1V563.7h-1zM385 484.4h1V576.8h-1zM386 488.1h1V575.3h-1zM387 487.0h1V554.6h-1zM388 484.2h1V557.8h-1zM389 485.0h1V546.0h-1zM390 484.8h1V562.7h-1zM391 486.8h1V597.8h-1zM392 487.7h1V559.8h-1zM393 484.2h1V569.0h-1zM394 484.8h1V559.2h-1zM395 487.6h1V582.5h-1zM396 484.6h1V571.4h-1zM397 485.0h1V553.1h-1zM398 484.2h1V566.2h-1zM399 484.3h1V562.1h-1zM400 484.1h1V573.5h-1zM401 484.4h1V550.8h-1zM402 484.7h1V546.1h-1zM403 484.0h1V562.0h-1zM404 484.2h1V592.5h-1zM405 484.2h1V567.3h-1zM406 484.3h1V564.5h-1zM407 484.4h1V559.5h-1zM408 485.0h1V597.8h-1zM409 484.3h1V557.8h-1zM410 487.3h1V567.6h-1zM411 488.7h1V566.7h-1zM412 485.1h1V556.9h-1zM413 484.7h1V573.9h-1zM414 484.1h1V565.9h-1zM415 484.2h1V569.7h-1zM416 484.1h1V562.6h-1zM417 484.0h1V560.6h-1zM418 490.8h1V586.1h-1zM419 484.9h1V558.8h-1zM420 484.3h1V556.9h-1zM421 484.4h1V568.4h-1zM422 488.1h1V567.3h-1zM423 485.0h1V597.8h-1zM424 489.8h1V559.6h-1zM425 485.1h1V547.1h-1zM426 484.8h1V576.8h-1zM427 484.5h1V575.2h-1zM428 484.2h1V558.8h-1zM429 484.4h1V568.0h-1zM430 486.6h1V575.1h-1zM431 489.1h1V550.6h-1zM432 488.7h1V597.8h-1zM433 484.0h1V547.7h-1zM434 487.0h1V561.6h-1zM435 484.4h1V571.4h-1zM436 484.6h1V555.1h-1zM437 484.4h1V576.8h-1zM438 486.9h1V549.7h-1zM439 484.5h1V545.5h-1zM440 484.9h1V569.3h-1zM441 484.8h1V570.1h-1zM442 484.7h1V554.2h-1zM443 484.2h1V558.7h-1zM444 484.7h1V557.6h-1zM445 487.8h1V593.6h-1zM446 484.7h1V551.7h-1zM447 483.9h1V562.2h-1zM448 484.1h1V573.5h-1zM449 485.1h1V553.2h-1zM450 487.5h1V597.8h-1zM451 484.3h1V552.0h-1zM452 489.5h1V558.3h-1zM453 484.9h1V566.1h-1zM454 484.7h1V560.7h-1zM455 484.2h1V597.8h-1zM456 484.5h1V546.5h-1zM457 484.6h1V575.0h-1zM458 484.3h1V569.3h-1zM459 484.1h1V597.8h-1zM460 484.2h1V572.4h-1zM461 484.9h1V562.5h-1zM462 484.2h1V571.4h-1zM463 484.1h1V597.8h-1zM464 489.1h1V570.8h-1zM465 484.9h1V570.3h-1zM466 484.1h1V557.9h-1zM467 484.9h1V597.8h-1zM468 484.9h1V565.7h-1zM469 484.1h1V566.1h-1zM470 484.4h1V545.7h-1zM471 484.7h1V551.9h-1zM472 486.6h1V597.8h-1zM473 484.3h1V552.4h-1zM474 484.3h1V556.2h-1zM475 484.9h1V559.3h-1zM476 484.3h1V597.4h-1zM477 489.2h1V555.3h-1zM478 484.7h1V560.8h-1zM479 484.4h1V547.7h-1zM480 484.3h1V568.1h-1zM481 484.1h1V585.5h-1zM482 484.9h1V572.7h-1zM483 490.9h1V548.6h-1zM484 484.3h1V574.0h-1zM485 484.5h1V597.8h-1zM486 484.3h1V567.3h-1zM487 485.1h1V558.9h-1zM488 484.0h1V561.0h-1zM489 491.4h1V589.0h-1zM490 484.0h1V551.4h-1zM491 484.2h1V571.5h-1zM492 483.9h1V572.9h-1zM493 487.9h1V563.3h-1zM494 484.3h1V597.8h-1zM495 489.1h1V550.1h-1zM496 484.2h1V559.5h-1zM497 484.9h1V549.2h-1zM498 484.4h1V565.6h-1zM499 483.9h1V589.9h-1zM500 488.9h1V546.3h-1zM501 484.9h1V547.0h-1zM502 491.1h1V556.8h-1zM503 484.6h1V562.2h-1zM504 484.8h1V570.3h-1zM505 484.4h1V560.6h-1zM506 484.6h1V559.0h-1zM507 484.2h1V569.7h-1zM508 485.1h1V595.0h-1zM509 484.6h1V558.0h-1zM510 484.5h1V562.6h-1zM511 484.2h1V571.0h-1zM512 484.2h1V567.6h-1zM513 484.3h1V591.8h-1zM514 490.2h1V547.1h-1zM515 484.7h1V546.0h-1zM516 490.1h1V559.6h-1zM517 484.0h1V570.6h-1zM518 484.4h1V549.7h-1zM519 490.6h1V597.8h-1zM520 484.0h1V549.7h-1zM521 484.2h1V559.5h-1zM522 484.5h1V546.4h-1zM523 484.5h1V567.9h-1zM524 490.1h1V594.1h-1zM525 487.9h1V564.9h-1zM526 484.9h1V557.7h-1zM527 484.7h1V553.6h-1zM528 484.0h1V593.9h-1zM529 484.6h1V564.0h-1zM530 484.5h1V553.6h-1zM531 483.9h1V568.2h-1zM532 491.2h1V570.1h-1zM533 484.2h1V579.5h-1zM534 484.6h1V574.1h-1zM535 485.0h1V568.8h-1zM536 486.1h1V563.3h-1zM537 488.7h1V570.4h-1zM538 484.1h1V572.9h-1zM539 484.8h1V563.2h-1zM540 484.2h1V547.3h-1zM541 488.5h1V558.1h-1zM542 484.6h1V594.4h-1zM543 491.2h1V566.9h-1zM544 484.0h1V576.7h-1zM545 486.2h1V564.3h-1zM546 484.5h1V548.2h-1zM547 484.3h1V597.8h-1zM548 489.9h1V559.6h-1zM549 484.6h1V576.2h-1zM550 484.7h1V575.2h-1zM551 484.9h1V575.1h-1zM552 484.6h1V581.2h-1zM553 488.9h1V575.8h-1zM554 483.9h1V546.4h-1zM555 484.8h1V571.4h-1zM556 484.4h1V557.0h-1zM557 484.5h1V557.0h-1zM558 490.9h1V597.8h-1zM559 484.5h1V570.7h-1zM560 484.5h1V554.4h-1zM561 484.3h1V569.0h-1zM562 490.2h1V554.0h-1zM563 484.3h1V597.8h-1zM564 484.4h1V550.3h-1zM565 484.8h1V558.4h-1zM566 483.9h1V562.1h-1zM567 484.1h1V574.9h-1zM568 484.3h1V575.0h-1zM569 486.7h1V567.6h-1zM570 484.3h1V549.8h-1zM571 484.0h1V556.1h-1zM572 484.6h1V586.4h-1zM573 487.2h1V548.2h-1zM574 484.1h1V556.8h-1zM575 484.5h1V565.3h-1zM576 485.1h1V546.1h-1zM577 487.0h1V569.3h-1zM578 484.5h1V597.8h-1zM579 484.1h1V545.7h-1zM580 484.3h1V561.3h-1zM581 485.0h1V597.8h-1zM582 484.5h1V560.9h-1zM583 484.9h1V573.6h-1zM584 484.1h1V568.9h-1zM585 484.0h1V567.8h-1zM586 484.5h1V597.8h-1zM587 488.7h1V554.8h-1zM588 484.0h1V562.1h-1zM589 484.4h1V548.5h-1zM590 484.9h1V587.8h-1zM591 485.0h1V561.8h-1zM592 484.5h1V557.2h-1zM593 485.0h1V567.8h-1zM594 484.1h1V571.6h-1zM595 488.8h1V577.8h-1zM596 484.7h1V547.7h-1zM597 484.9h1V556.2h-1zM598 484.1h1V569.0h-1zM599 484.6h1V575.4h-1zM600 484.3h1V597.8h-1zM601 484.2h1V566.8h-1zM602 484.3h1V554.9h-1zM603 485.0h1V574.4h-1zM604 484.8h1V595.4h-1zM605 490.7h1V563.2h-1zM606 487.1h1V564.6h-1zM607 484.5h1V575.5h-1zM608 488.6h1V575.8h-1zM609 484.7h1V575.2h-1zM610 485.1h1V597.8h-1zM611 490.2h1V547.4h-1zM612 484.8h1V556.5h-1zM613 484.4h1V549.3h-1zM614 484.0h1V597.8h-1zM615 484.4h1V550.0h-1zM616 484.4h1V566.7h-1zM617 484.1h1V547.3h-1zM618 488.2h1V593.1h-1zM619 484.5h1V564.8h-1zM620 484.2h1V573.1h-1zM621 484.2h1V570.9h-1zM622 484.4h1V556.3h-1zM623 484.8h1V596.5h-1zM624 484.4h1V574.0h-1zM625 484.7h1V569.4h-1zM626 484.7h1V560.1h-1zM627 485.1h1V557.2h-1zM628 484.8h1V597.8h-1zM629 488.2h1V576.8h-1zM630 484.9h1V572.3h-1zM631 484.8h1V564.6h-1zM632 485.1h1V597.8h-1zM633 484.8h1V575.6h-1zM634 484.1h1V566.0h-1zM635 484.4h1V550.6h-1zM636 485.1h1V597.8h-1zM637 484.3h1V570.0h-1zM638 484.9h1V558.4h-1zM639 484.7h1V550.8h-1zM640 487.0h1V549.7h-1zM641 484.5h1V577.5h-1zM642 484.2h1V568.3h-1zM643 484.2h1V561.3h-1zM644 485.1h1V553.3h-1zM645 484.4h1V560.0h-1zM646 484.1h1V581.6h-1zM647 484.9h1V553.4h-1zM648 484.0h1V568.1h-1zM649 486.2h1V557.5h-1zM650 484.0h1V597.8h-1zM651 484.1h1V554.9h-1zM652 484.5h1V555.5h-1zM653 487.6h1V554.6h-1zM654 490.7h1V561.2h-1zM655 484.8h1V597.8h-1zM656 484.7h1V562.2h-1zM657 484.5h1V563.0h-1zM658 486.1h1V555.9h-1zM659 490.8h1V572.2h-1zM660 484.4h1V577.3h-1zM661 485.0h1V572.2h-1zM662 484.5h1V556.1h-1zM663 491.5h1V545.7h-1zM664 485.0h1V560.1h-1zM665 484.1h1V597.8h-1zM666 484.7h1V553.1h-1zM667 484.6h1V566.2h-1zM668 490.2h1V556.9h-1zM669 489.5h1V568.7h-1zM670 486.2h1V571.1h-1zM671 488.6h1V575.8h-1zM672 484.6h1V575.1h-1zM673 484.8h1V552.0h-1zM674 487.5h1V574.6h-1zM675 487.3h1V597.8h-1zM676 485.1h1V567.3h-1zM677 484.5h1V547.5h-1zM678 486.2h1V576.5h-1zM679 489.3h1V597.8h-1zM680 488.8h1V562.1h-1zM681 487.0h1V568.9h-1zM682 484.9h1V565.8h-1zM683 484.0h1V597.8h-1zM684 486.9h1V546.7h-1zM685 486.3h1V572.5h-1zM686 486.6h1V555.4h-1zM687 486.9h1V563.2h-1zM688 484.5h1V592.2h-1zM689 484.1h1V557.0h-1zM690 484.6h1V575.3h-1zM691 485.0h1V546.8h-1zM692 485.0h1V552.0h-1zM693 484.0h1V576.4h-1zM694 484.6h1V574.0h-1zM695 485.0h1V577.0h-1zM696 484.1h1V559.1h-1zM697 489.5h1V555.2h-1zM698 484.9h1V597.8h-1zM699 484.3h1V568.0h-1zM700 484.3h1V545.1h-1zM701 484.7h1V547.7h-1zM702 484.8h1V589.4h-1zM703 484.3h1V558.9h-1zM704 484.1h1V570.7h-1zM705 486.2h1V559.5h-1zM706 485.1h1V597.8h-1zM707 488.5h1V571.9h-1zM708 484.3h1V549.5h-1zM709 486.9h1V547.7h-1zM710 484.9h1V583.6h-1zM711 484.6h1V564.7h-1zM712 484.2h1V570.4h-1zM713 484.2h1V565.3h-1zM714 489.3h1V567.7h-1zM715 484.4h1V579.8h-1zM716 484.5h1V559.0h-1zM717 484.0h1V559.0h-1zM718 484.6h1V570.1h-1zM719 484.2h1V545.6h-1zM720 486.7h1V570.6h-1zM721 484.2h1V560.5h-1zM722 484.3h1V550.6h-1zM723 484.5h1V574.1h-1zM724 484.5h1V555.9h-1zM725 491.1h1V575.5h-1zM726 485.0h1V571.9h-1zM727 489.0h1V575.6h-1zM728 484.3h1V551.4h-1zM729 484.7h1V569.0h-1zM730 486.9h1V595.3h-1zM731 484.3h1V551.7h-1zM732 489.9h1V565.1h-1zM733 485.1h1V559.2h-1zM734 484.7h1V557.5h-1zM735 484.7h1V594.4h-1zM736 484.3h1V549.1h-1zM737 484.4h1V549.6h-1zM738 487.4h1V570.0h-1zM739 487.6h1V559.8h-1zM740 484.9h1V581.9h-1zM741 484.6h1V545.7h-1zM742 483.9h1V559.7h-1zM743 485.0h1V573.2h-1zM744 489.1h1V548.9h-1zM745 484.6h1V597.8h-1zM746 484.8h1V566.6h-1zM747 484.1h1V563.1h-1zM748 484.6h1V570.8h-1zM749 486.9h1V575.8h-1zM750 484.2h1V587.2h-1zM751 483.9h1V563.6h-1zM752 484.8h1V564.9h-1zM753 488.5h1V554.4h-1zM754 488.9h1V564.7h-1zM755 489.4h1V597.8h-1zM756 490.2h1V575.2h-1zM757 491.0h1V561.3h-1zM758 488.4h1V560.8h-1zM759 489.7h1V550.6h-1zM760 489.3h1V597.3h-1zM761 489.1h1V558.0h-1zM762 488.7h1V549.2h-1zM763 489.2h1V556.3h-1zM764 490.6h1V577.6h-1zM765 494.7h1V575.2h-1zM766 491.2h1V560.4h-1zM767 492.9h1V547.2h-1zM768 490.7h1V554.0h-1zM769 493.2h1V563.6h-1zM770 493.2h1V578.5h-1zM771 492.3h1V546.3h-1zM772 495.3h1V546.1h-1zM773 495.6h1V571.0h-1zM774 495.8h1V597.8h-1z" fill="#8b0000"/>
<path d="M253 476.8h1V484.2h-1zM260 481.0h1V484.7h-1zM264 479.0h1V484.7h-1zM265 479.1h1V485.0h-1zM269 480.1h1V484.6h-1zM270 480.8h1V484.7h-1zM273 481.4h1V484.8h-1zM274 479.7h1V484.7h-1zM277 479.7h1V485.0h-1zM278 480.9h1V484.4h-1zM282 477.6h1V489.0h-1zM291 477.9h1V485.1h-1zM293 478.5h1V483.9h-1zM294 479.2h1V484.6h-1zM302 481.9h1V484.2h-1zM303 481.6h1V484.9h-1zM307 480.3h1V484.3h-1zM308 479.9h1V484.7h-1zM310 483.0h1V489.1h-1zM312 481.7h1V484.7h-1zM316 480.0h1V487.2h-1zM324 482.7h1V484.8h-1zM329 480.9h1V484.2h-1zM330 477.1h1V489.0h-1zM334 480.9h1V488.9h-1zM342 481.5h1V484.5h-1zM343 482.6h1V484.4h-1zM347 477.4h1V487.3h-1zM350 482.6h1V484.5h-1zM352 481.2h1V485.1h-1zM353 481.7h1V490.8h-1zM354 481.5h1V484.9h-1zM355 481.6h1V484.0h-1zM357 479.3h1V484.6h-1zM360 479.2h1V484.2h-1zM371 478.2h1V484.6h-1zM373 478.3h1V490.5h-1zM374 480.0h1V484.8h-1zM376 478.9h1V488.5h-1zM384 478.6h1V484.1h-1zM386 481.5h1V488.1h-1zM388 482.7h1V484.2h-1zM389 479.8h1V485.0h-1zM390 479.9h1V484.8h-1zM395 478.7h1V487.6h-1zM398 480.1h1V484.2h-1zM399 478.3h1V484.3h-1zM404 479.6h1V484.2h-1zM405 480.3h1V484.2h-1zM407 482.2h1V484.4h-1zM408 478.1h1V485.0h-1zM410 476.5h1V487.3h-1zM412 482.5h1V485.1h-1zM416 477.4h1V484.1h-1zM422 478.5h1V488.1h-1zM426 479.5h1V484.8h-1zM430 480.4h1V486.6h-1zM438 479.7h1V486.9h-1zM439 482.8h1V484.5h-1zM444 482.6h1V484.7h-1zM446 478.2h1V484.7h-1zM448 481.8h1V484.1h-1zM457 480.3h1V484.6h-1zM463 481.3h1V484.1h-1zM466 477.1h1V484.1h-1zM467 478.5h1V484.9h-1zM470 479.4h1V484.4h-1zM471 481.5h1V484.7h-1zM489 479.7h1V491.4h-1zM495 480.6h1V489.1h-1zM496 478.7h1V484.2h-1zM499 482.1h1V483.9h-1zM500 479.3h1V488.9h-1zM504 479.7h1V484.8h-1zM505 482.2h1V484.4h-1zM506 477.8h1V484.6h-1zM508 481.0h1V485.1h-1zM509 481.1h1V484.6h-1zM512 482.9h1V484.2h-1zM518 481.7h1V484.4h-1zM520 482.8h1V484.0h-1zM524 481.0h1V490.1h-1zM527 481.7h1V484.7h-1zM533 480.7h1V484.2h-1zM535 482.3h1V485.0h-1zM536 479.3h1V486.1h-1zM537 479.2h1V488.7h-1zM542 478.8h1V484.6h-1zM543 482.5h1V491.2h-1zM544 482.4h1V484.0h-1zM551 480.4h1V484.9h-1zM553 477.9h1V488.9h-1zM555 477.5h1V484.8h-1zM556 476.8h1V484.4h-1zM558 478.2h1V490.9h-1zM559 478.9h1V484.5h-1zM562 480.0h1V490.2h-1zM565 481.0h1V484.8h-1zM567 482.4h1V484.1h-1zM568 481.6h1V484.3h-1zM570 482.7h1V484.3h-1zM571 478.0h1V484.0h-1zM573 481.9h1V487.2h-1zM577 476.9h1V487.0h-1zM579 477.2h1V484.1h-1zM582 482.6h1V484.5h-1zM583 480.6h1V484.9h-1zM584 481.0h1V484.1h-1zM585 480.8h1V484.0h-1zM590 482.6h1V484.9h-1zM592 478.7h1V484.5h-1zM594 478.9h1V484.1h-1zM595 482.0h1V488.8h-1zM597 481.5h1V484.9h-1zM598 482.4h1V484.1h-1zM600 478.3h1V484.3h-1zM602 481.3h1V484.3h-1zM603 482.8h1V485.0h-1zM604 479.2h1V484.8h-1zM606 479.5h1V487.1h-1zM608 480.1h1V488.6h-1zM611 480.8h1V490.2h-1zM614 479.1h1V484.0h-1zM619 482.9h1V484.5h-1zM625 481.7h1V484.7h-1zM628 481.1h1V484.8h-1zM629 482.6h1V488.2h-1zM631 481.6h1V484.8h-1zM632 482.0h1V485.1h-1zM633 480.9h1V484.8h-1zM637 479.3h1V484.3h-1zM638 479.7h1V484.9h-1zM639 482.4h1V484.7h-1zM640 482.0h1V487.0h-1zM643 480.2h1V484.2h-1zM644 481.1h1V485.1h-1zM648 482.3h1V484.0h-1zM650 476.9h1V484.0h-1zM653 479.4h1V487.6h-1zM658 482.0h1V486.1h-1zM661 478.9h1V485.0h-1zM663 479.9h1V491.5h-1zM667 478.8h1V484.6h-1zM669 482.1h1V489.5h-1zM670 478.6h1V486.2h-1zM671 479.0h1V488.6h-1zM672 480.8h1V484.6h-1zM675 482.3h1V487.3h-1zM681 482.4h1V487.0h-1zM684 482.4h1V486.9h-1zM686 477.9h1V486.6h-1zM689 482.5h1V484.1h-1zM690 479.8h1V484.6h-1zM691 479.3h1V485.0h-1zM697 481.1h1V489.5h-1zM699 482.3h1V484.3h-1zM700 476.6h1V484.3h-1zM703 481.8h1V484.3h-1zM705 481.7h1V486.2h-1zM706 477.8h1V485.1h-1zM710 478.0h1V484.9h-1zM717 481.5h1V484.0h-1zM737 481.2h1V484.4h-1zM738 482.4h1V487.4h-1zM739 481.7h1V487.6h-1zM740 478.5h1V484.9h-1zM744 480.0h1V489.1h-1zM749 480.2h1V486.9h-1zM751 482.5h1V483.9h-1zM754 482.9h1V488.9h-1z" fill="#a44c4c"/>
<path d="M220.5 483.5 H776" stroke="#f0c0c0" stroke-width="1"/>
<path d="M475.3 134.8 V487" stroke="#a43848" stroke-width="1.25"/>
<path d="M229.6 344.6 V487" stroke="#a04858" stroke-width="1.2"/>
<path d="M498.0 394.0 V487" stroke="#a87c84" stroke-width="1.7"/>
<path d="M662.3 423.5 V487" stroke="#a85858" stroke-width="1.3"/>
<path d="M714.2 452.3 V487" stroke="#b87474" stroke-width="1.0"/>
<path d="M728.2 462 V487" stroke="#b87474" stroke-width="1.0"/>
<path d="M609.2 461 V487" stroke="#b87474" stroke-width="1.0"/>
<path d="M595.2 466 V487" stroke="#b87474" stroke-width="1.0"/>
<path d="M519.3 470 V487" stroke="#b87474" stroke-width="1.0"/>
<path d="M670.5 472 V487" stroke="#b87474" stroke-width="1.0"/>
<path d="M749 474 V487" stroke="#b87474" stroke-width="1.0"/>
<path d="M289.3 458 V487" stroke="#c07070" stroke-width="1.0"/>
<path d="M222.6 468 V487" stroke="#b87474" stroke-width="1.0"/>
<path d="M236.4 471 V487" stroke="#b87474" stroke-width="1.0"/>
<path d="M370.4 465.2 V487" stroke="#904848" stroke-width="1.0"/>
<path d="M423.3 459 V487" stroke="#a06060" stroke-width="1.1"/>
<path d="M262 474 V487" stroke="#b07070" stroke-width="1.0"/>
<path d="M469.2 471.4 h1 V487 h-1z M471.2 473.6 h1 V487 h-1z M479.6 472 h1 V487 h-1z M481.5 475 h1 V487 h-1z" fill="#a05050"/>
<path d="M473.5 460.8 h3 V487 h-3z M476.5 465.6 h2.4 V487 h-2.4z" fill="#8a1010"/>
<path d="M231 329.5 h4 M233 327.5 v4" stroke="#f0b0c0" stroke-width="0.8"/><circle cx="233" cy="329.5" r="1.1" fill="#9a2848"/>
<path d="M533.1 144.4 L484.1 202.1" stroke="#111" stroke-width="3.0" stroke-linecap="round"/><path d="M478.9 208.2 L481.2 197.0 L489.6 204.1Z" fill="#111"/>
<path d="M287.8 285.8 L239.2 343.3" stroke="#111" stroke-width="3.0" stroke-linecap="round"/><path d="M234.0 349.4 L236.3 338.2 L244.7 345.3Z" fill="#111"/>
<path d="M601.3 360.0 L648.7 416.9" stroke="#111" stroke-width="3.0" stroke-linecap="round"/><path d="M653.8 423.0 L643.2 418.8 L651.6 411.8Z" fill="#111"/>
</svg>
<div class="c" style="left:195.75px;top:75px;width:60px;font-size:8.4px;color:#000;-webkit-text-stroke:0.12px #000"><span style="display:inline-block;transform:scaleX(0.84)">-60 M</span></div>
<div class="c" style="left:263.53px;top:75px;width:60px;font-size:8.4px;color:#000;-webkit-text-stroke:0.12px #000"><span style="display:inline-block;transform:scaleX(0.84)">-45 M</span></div>
<div class="c" style="left:331.31px;top:75px;width:60px;font-size:8.4px;color:#000;-webkit-text-stroke:0.12px #000"><span style="display:inline-block;transform:scaleX(0.84)">-30 M</span></div>
<div class="c" style="left:399.09px;top:75px;width:60px;font-size:8.4px;color:#000;-webkit-text-stroke:0.12px #000"><span style="display:inline-block;transform:scaleX(0.84)">-15 M</span></div>
<div class="c" style="left:466.87px;top:75px;width:60px;font-size:8.4px;color:#000;-webkit-text-stroke:0.12px #000"><span style="display:inline-block;transform:scaleX(0.84)">0</span></div>
<div class="c" style="left:534.65px;top:75px;width:60px;font-size:8.4px;color:#000;-webkit-text-stroke:0.12px #000"><span style="display:inline-block;transform:scaleX(0.84)">15 M</span></div>
<div class="c" style="left:602.43px;top:75px;width:60px;font-size:8.4px;color:#000;-webkit-text-stroke:0.12px #000"><span style="display:inline-block;transform:scaleX(0.84)">30 M</span></div>
<div class="c" style="left:670.21px;top:75px;width:60px;font-size:8.4px;color:#000;-webkit-text-stroke:0.12px #000"><span style="display:inline-block;transform:scaleX(0.84)">45 M</span></div>
<div class="c" style="left:737.99px;top:75px;width:60px;font-size:8.4px;color:#000;-webkit-text-stroke:0.12px #000"><span style="display:inline-block;transform:scaleX(0.84)">60 M</span></div>
<div class="r" style="left:156px;top:113.55px;width:60px;font-size:8.4px;color:#000;-webkit-text-stroke:0.12px #000"><span style="display:inline-block;transform:scaleX(0.87);transform-origin:right">0</span></div>
<div class="r" style="left:156px;top:161.37px;width:60px;font-size:8.4px;color:#000;-webkit-text-stroke:0.12px #000"><span style="display:inline-block;transform:scaleX(0.87);transform-origin:right">-15</span></div>
<div class="r" style="left:156px;top:209.19px;width:60px;font-size:8.4px;color:#000;-webkit-text-stroke:0.12px #000"><span style="display:inline-block;transform:scaleX(0.87);transform-origin:right">-30</span></div>
<div class="r" style="left:156px;top:257.01px;width:60px;font-size:8.4px;color:#000;-webkit-text-stroke:0.12px #000"><span style="display:inline-block;transform:scaleX(0.87);transform-origin:right">-45</span></div>
<div class="r" style="left:156px;top:304.83px;width:60px;font-size:8.4px;color:#000;-webkit-text-stroke:0.12px #000"><span style="display:inline-block;transform:scaleX(0.87);transform-origin:right">-60</span></div>
<div class="r" style="left:156px;top:352.65px;width:60px;font-size:8.4px;color:#000;-webkit-text-stroke:0.12px #000"><span style="display:inline-block;transform:scaleX(0.87);transform-origin:right">-75</span></div>
<div class="r" style="left:156px;top:400.47px;width:60px;font-size:8.4px;color:#000;-webkit-text-stroke:0.12px #000"><span style="display:inline-block;transform:scaleX(0.87);transform-origin:right">-90</span></div>
<div class="r" style="left:156px;top:448.29px;width:60px;font-size:8.4px;color:#000;-webkit-text-stroke:0.12px #000"><span style="display:inline-block;transform:scaleX(0.87);transform-origin:right">-105</span></div>
<div class="r" style="left:156px;top:496.11px;width:60px;font-size:8.4px;color:#000;-webkit-text-stroke:0.12px #000"><span style="display:inline-block;transform:scaleX(0.87);transform-origin:right">-120</span></div>
<div class="r" style="left:156px;top:543.93px;width:60px;font-size:8.4px;color:#000;-webkit-text-stroke:0.12px #000"><span style="display:inline-block;transform:scaleX(0.87);transform-origin:right">-135</span></div>
<div class="c" style="left:357.6px;top:457.0px;width:20px;font-size:9.3px;color:#a83450">6</div>
<div class="c" style="left:380.2px;top:466.59999999999997px;width:20px;font-size:9.3px;color:#a83450">5</div>
<div class="c" style="left:402px;top:466.2px;width:20px;font-size:9.3px;color:#a83450">4</div>
<div class="c" style="left:425px;top:465.4px;width:20px;font-size:9.3px;color:#a83450">3</div>
<div class="c" style="left:447px;top:456.9px;width:20px;font-size:9.3px;color:#a83450">2</div>
<div class="t" style="left:541.2px;top:131.59px;font-size:16.7px;font-weight:bold;color:#111;line-height:normal">&#8211;4.94 MHz</div>
<div class="t" style="left:296.0px;top:267.29px;font-size:16.7px;font-weight:bold;color:#111;line-height:normal">&#8211;59.29 MHz</div>
<div class="t" style="left:514.3px;top:336.79px;font-size:16.7px;font-weight:bold;color:#111;line-height:normal">36.38 MHz</div>
<div style="position:absolute;left:600px;top:593px;width:192px;height:22px;background:rgba(255,255,255,0.28)"></div>
<div class="t" style="left:616px;top:595.6px;font-size:19.3px;color:#abc6a3;line-height:normal;-webkit-text-stroke:0.35px #abc6a3">www.cntronics.com</div>
</body></html>
